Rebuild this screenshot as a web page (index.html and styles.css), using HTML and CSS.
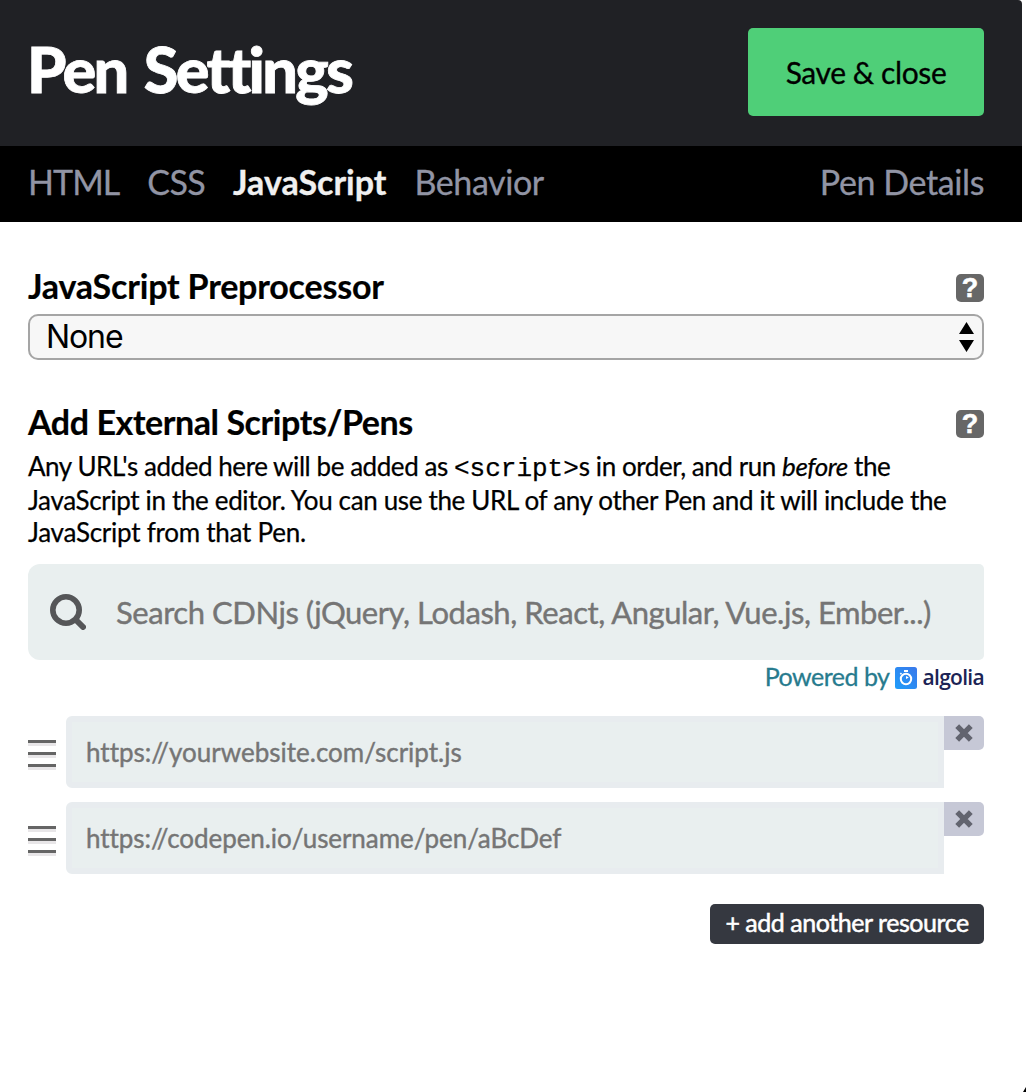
FILE: index.html
```html
<!DOCTYPE html>
<html lang="en">
<head>
<meta charset="utf-8">
<title>Pen Settings</title>
<link rel="stylesheet" href="styles.css">
</head>
<body>
<main class="modal">
  <header class="modal-header">
    <h1 class="title"><span>Pen Settings</span></h1>
    <button class="save"><span>Save &amp; close</span></button>
  </header>
  <nav class="tabs">
    <a class="tab tab-html"><span>HTML</span></a>
    <a class="tab tab-css"><span>CSS</span></a>
    <a class="tab tab-js active"><span>JavaScript</span></a>
    <a class="tab tab-behavior"><span>Behavior</span></a>
    <a class="tab tab-details"><span>Pen Details</span></a>
  </nav>
  <div class="content">
    <section class="preprocessor">
      <div class="heading-row">
        <h2 class="heading"><span>JavaScript Preprocessor</span></h2>
        <span class="help">?</span>
      </div>
      <div class="select">
        <span>None</span>
        <svg class="arrows" width="15" height="30" viewBox="0 0 15 30"><path d="M7.5 0 15 12H0zM0 18h15L7.5 30z"/></svg>
      </div>
    </section>
    <section class="external">
      <div class="heading-row">
        <h2 class="heading heading-external"><span>Add External Scripts/Pens</span></h2>
        <span class="help">?</span>
      </div>
      <p class="description">
        <span class="line line-one">Any URL's added here will be added as <code>&lt;script&gt;</code>s in order, and run <em>before</em> the</span>
        <span class="line line-two">JavaScript in the editor. You can use the URL of any other Pen and it will include the</span>
        <span class="line line-three">JavaScript from that Pen.</span>
      </p>
      <div class="search">
        <svg class="search-icon" width="36" height="36" viewBox="0 0 36 36" fill="none" stroke="#555658"><circle cx="16" cy="16" r="13.2" stroke-width="5.6"/><path d="m26 26 7 7" stroke-width="6" stroke-linecap="round"/></svg>
        <span class="search-text">Search CDNjs (jQuery, Lodash, React, Angular, Vue.js, Ember...)</span>
      </div>
      <div class="powered">
        <span class="powered-text">Powered by</span>
        <svg class="algolia-mark" width="22" height="22" viewBox="0 0 22 22">
          <defs><linearGradient id="blue" x1="0" y1="1" x2="1" y2="0"><stop stop-color="#1f9dfa"/><stop offset="1" stop-color="#3a78ea"/></linearGradient></defs>
          <rect width="22" height="22" rx="2.5" fill="url(#blue)"/>
          <g fill="none" stroke="#fff"><circle cx="11" cy="12" r="5.2" stroke-width="2"/><path d="M9 4h4" stroke-width="2"/><path d="m5.3 7.3 1.2-1.2" stroke-width="1.6"/></g>
          <path d="M11 12V9l2.8 1.6z" fill="#fff"/>
        </svg>
        <span class="algolia-text">algolia</span>
      </div>
      <div class="resources">
        <div class="resource">
          <span class="handle"><i></i><i></i><i></i></span>
          <div class="url"><span class="url-one">https://yourwebsite.com/script.js</span></div>
          <button class="remove" aria-label="Remove"><svg width="18" height="18" viewBox="0 0 18 18"><path d="m2.2 2.2 13.6 13.6m0-13.6L2.2 15.8" stroke="#62646f" stroke-width="5.4"/></svg></button>
        </div>
        <div class="resource">
          <span class="handle"><i></i><i></i><i></i></span>
          <div class="url"><span class="url-two">https://codepen.io/username/pen/aBcDef</span></div>
          <button class="remove" aria-label="Remove"><svg width="18" height="18" viewBox="0 0 18 18"><path d="m2.2 2.2 13.6 13.6m0-13.6L2.2 15.8" stroke="#62646f" stroke-width="5.4"/></svg></button>
        </div>
      </div>
      <button class="add"><span>+ add another resource</span></button>
    </section>
  </div>
</main>
<svg class="corner" width="3" height="5" viewBox="0 0 3 5"><path d="M3 0v5H0z"/></svg>
</body>
</html>
```
FILE: styles.css
```css
* { box-sizing: border-box; }
body { margin: 0; height: 1092px; overflow: hidden; background: #fff; color: #000; font-family: Lato, sans-serif; font-variant-ligatures: none; }
button { border: 0; padding: 0; font-family: inherit; }
svg { display: block; flex: none; }
.modal { width: 1022px; height: 1092px; }
.modal-header { display: flex; justify-content: space-between; height: 146px; padding: 28px 38px 0 28px; background: #202125; border-top-right-radius: 4px; }
.title { margin: -3px 0 0 -1px; color: #fff; font-size: 63px; font-weight: 900; line-height: 88px; letter-spacing: -2.7px; word-spacing: 5px; white-space: nowrap; -webkit-text-stroke: .8px; }
.save { width: 236px; height: 88px; border-radius: 5px; background: #4fcf78; color: #000; font-size: 30px; line-height: 86px; letter-spacing: -.4px; -webkit-text-stroke: .3px; }
.tabs { display: flex; gap: 28px; height: 76px; padding: 0 38px 0 28px; background: #000; color: #9194a4; font-size: 34px; line-height: 71px; letter-spacing: -.4px; white-space: nowrap; -webkit-text-stroke: .3px; }
.tab-html { letter-spacing: -.95px; }
.tab-css { letter-spacing: -.6px; }
.active { color: #f0f0f0; font-weight: 700; letter-spacing: 0; }
.tab-details { margin-left: auto; }
.content { padding: 44px 38px 0 28px; }
.heading-row { display: flex; justify-content: space-between; height: 48px; }
.heading { margin: 0; font-size: 34px; font-weight: 700; line-height: 39px; letter-spacing: -.19px; white-space: nowrap; -webkit-text-stroke: .2px; }
.heading-external { letter-spacing: -.42px; }
.help { width: 28px; height: 28px; margin-top: 8px; border-radius: 5px; background: #676767; color: #fff; font: 700 27px/29px "Liberation Sans", sans-serif; text-align: center; -webkit-text-stroke: .5px; }
.select { display: flex; justify-content: space-between; align-items: center; height: 46px; border: 2px solid #a5a5a5; border-radius: 10px; padding: 0 8px 0 16px; background: #f7f7f7; font: 32px/42px "Inter", sans-serif; letter-spacing: -1.1px; }
.external { margin-top: 42px; }
.description { margin: 0; font-size: 26px; line-height: 33px; white-space: nowrap; -webkit-text-stroke: .25px; }
.line { display: block; height: 33px; }
.line-one { letter-spacing: -.44px; }
.line-two { line-height: 34px; letter-spacing: -.35px; }
.line-three { letter-spacing: -.25px; }
.description code { font: 26px/30px "Liberation Mono", monospace; letter-spacing: 0; }
.search { display: flex; align-items: center; gap: 30px; height: 96px; margin-top: 15px; border-radius: 12px 5px 5px 12px; padding-left: 22px; background: #e9efef; color: #757575; font-size: 31px; letter-spacing: -.45px; white-space: nowrap; -webkit-text-stroke: .4px; }
.powered { display: flex; align-items: center; justify-content: flex-end; height: 35px; color: #277b8e; font-size: 25px; letter-spacing: -.5px; white-space: nowrap; -webkit-text-stroke: .3px; }
.powered-text { margin-top: -3px; }
.algolia-mark { margin: 0 6px 0 5px; }
.algolia-text { margin-top: -2px; color: #1c2455; font: 600 21px/30px "Open Sans", sans-serif; letter-spacing: -.7px; -webkit-text-stroke: 0; }
.resources { display: grid; gap: 14px; margin-top: 21px; }
.resource { display: flex; height: 72px; }
.handle { width: 38px; padding-top: 24px; }
.handle i { display: block; width: 28px; height: 6px; margin-bottom: 6px; border-top: 3px solid #656565; background: #e8e6e8; }
.url { width: 878px; border: 6px solid #e8ecef; border-radius: 6px 0 0 6px; padding-left: 14px; background: #e9efef; color: #757575; font-size: 26px; line-height: 61px; white-space: nowrap; -webkit-text-stroke: .4px; }
.url-two { letter-spacing: -.07px; }
.remove { display: flex; align-items: center; justify-content: center; width: 40px; height: 34px; border-radius: 0 5px 5px 0; background: #c6c8d6; }
.add { display: block; width: 274px; height: 40px; margin: 30px 0 0 auto; border-radius: 5px; background: #353840; color: #fff; font-size: 25px; line-height: 35px; padding-bottom: 4px; letter-spacing: -.46px; white-space: nowrap; -webkit-text-stroke: .5px; }
.corner { position: absolute; right: 0; bottom: 0; }
```
